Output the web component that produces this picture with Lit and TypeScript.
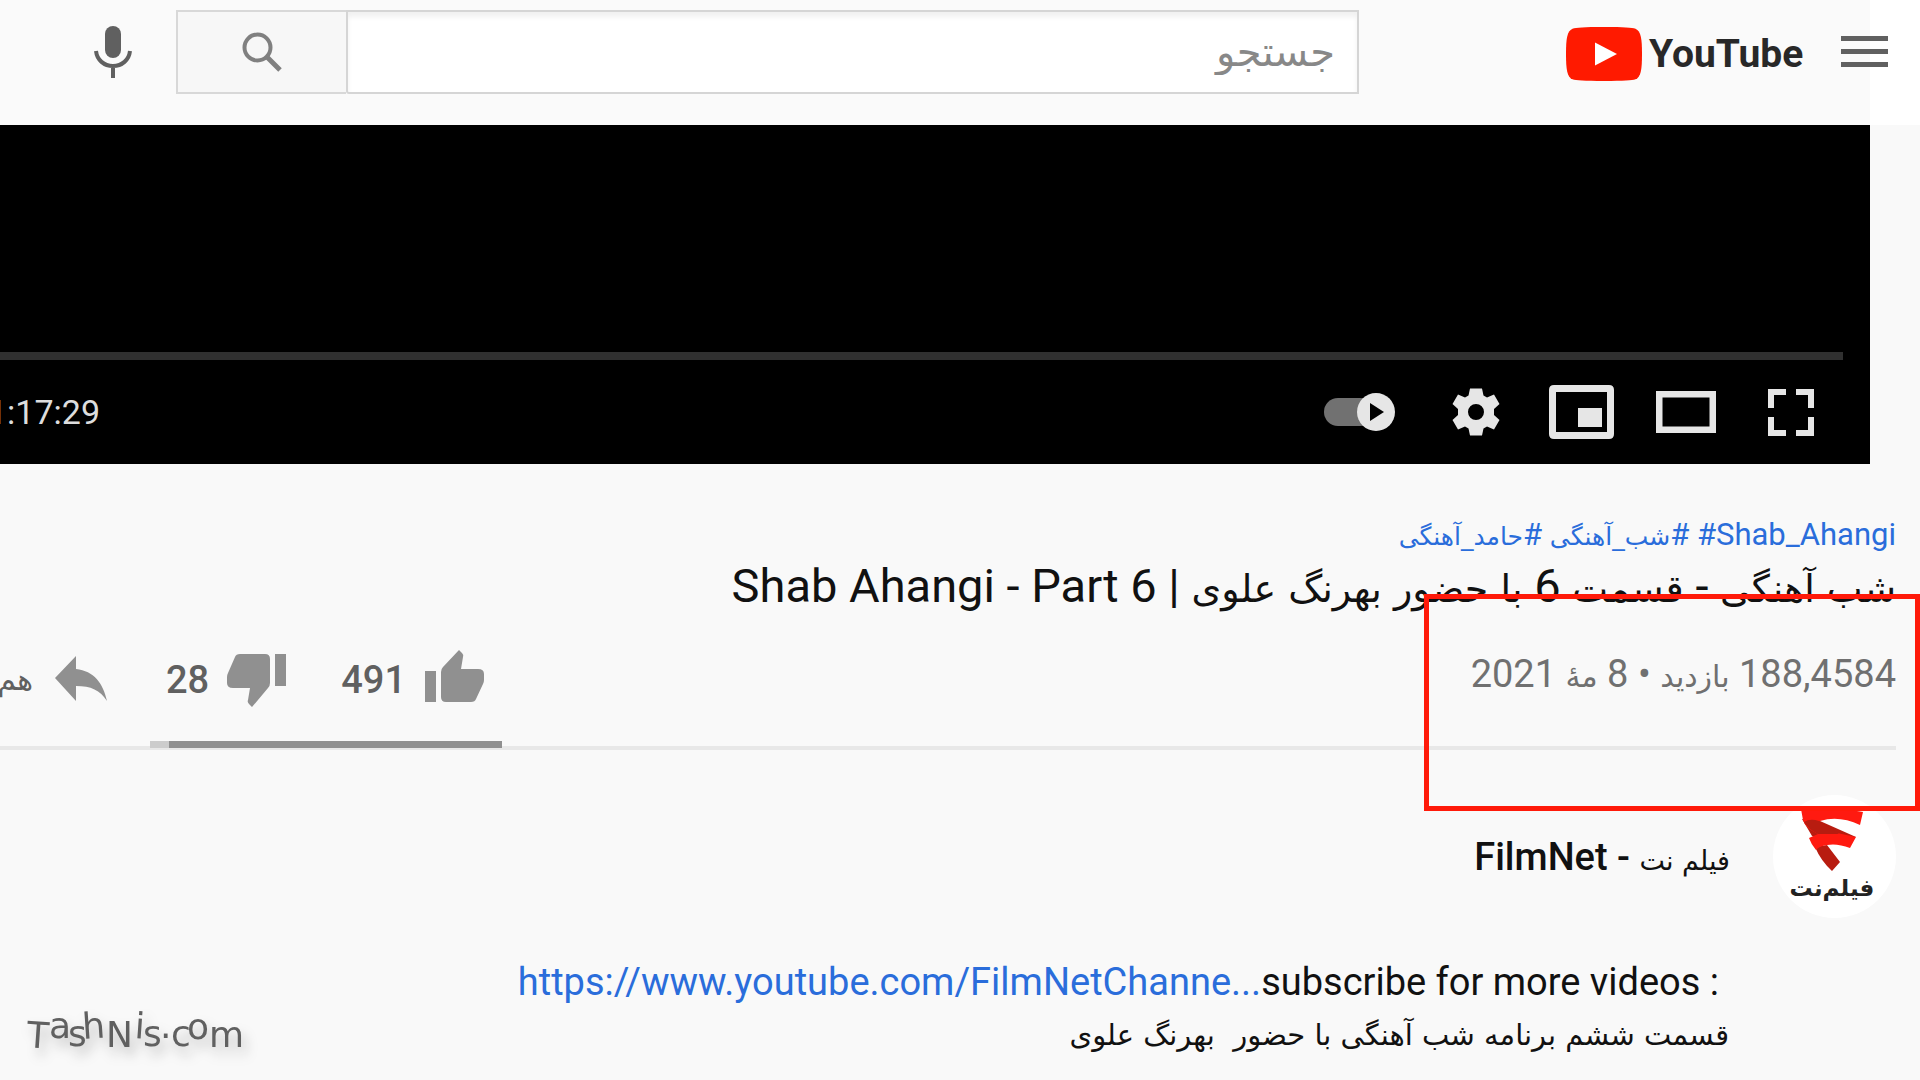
import { LitElement, html, css, svg } from "lit";
import { customElement } from "lit/decorators.js";

const icons = {
  fullscreen: svg`<path d="M29 7h18v6H35v13h-6zM57 7h18v19h-6V13H57zM29 35h6v13h12v6H29zM69 35h6v19H57v-6h12z"/>`,
  theater: svg`<path fill-rule="evenodd" d="M22 9h60v42H22zM28.500 15.500v29h47v-29z"/>`,
  mini: svg`<path fill-rule="evenodd" d="M25 3h55q5 0 5 5v44q0 5-5 5H25q-5 0-5-5V8q0-5 5-5zM27 10v40h51V10zM49 26h24v19H49z"/>`,
  gear: svg`<g transform="translate(52 30)"><path fill-rule="evenodd" d="M-6-23.500H6L7.500-16.500 11-14.500 18-17.500 23.500-8 18-3V3L23.500 8 18 17.500 11 14.500 7.500 16.500 6 23.500H-6L-7.500 16.500-11 14.500-18 17.500-23.500 8-18 3V-3L-23.500-8-18-17.500-11-14.500-7.500-16.500zM0-8a8 8 0 1 0 0 16a8 8 0 1 0 0-16z"/></g>`,
  autoplay: svg`<rect x="5" y="16" width="50" height="28" rx="14" fill="#717171"/><circle cx="57" cy="30" r="19"/><path d="M51 21v18l14-9z" fill="#000"/>`,
};

@customElement("app-root")
export class AppRoot extends LitElement {
  static styles = css`
    :host {
      display: block;
      position: relative;
      direction: rtl;
      min-height: 100vh;
      overflow: hidden;
      background: #f9f9f9;
      color: #111;
      font-family: Roboto, "DejaVu Sans", sans-serif;
    }
    * { box-sizing: border-box; }
    button {
      display: flex;
      align-items: center;
      padding: 0;
      border: 0;
      background: none;
      color: inherit;
      font: inherit;
      cursor: pointer;
    }
    a { color: #2a6ddb; text-decoration: none; }
    svg { display: block; flex: none; }
    .fa { line-height: 0; font-family: "DejaVu Sans", sans-serif; }

    .header {
      display: flex;
      align-items: center;
      height: 125px;
      padding: 0 32px 22px 94px;
      background: linear-gradient(to left, #fff 50px, #fafafa 50px);
    }
    .brand { display: flex; align-items: center; gap: 7px; margin: 4px 40px 0 207px; direction: ltr; color: #282828; }
    .wordmark { width: 152px; font-size: 39px; font-weight: 700; line-height: 60px; }
    .search { display: flex; flex: 1; height: 84px; min-width: 0; }
    .search-input {
      flex: 1;
      min-width: 0;
      padding: 0 22px;
      border: 2px solid #d5d5d5;
      border-radius: 0 0 0 3px;
      background: #fff;
      box-shadow: inset 0 5px 5px #f1f1f1;
      font: 40px "DejaVu Sans", sans-serif;
      color: #111;
      outline: none;
    }
    .search-input::placeholder { color: #888; opacity: 1; }
    .search-button { justify-content: center; width: 170px; border: 2px solid #d8d8d8; border-right: 0; background: #f7f7f7; }
    .mic { margin-inline-start: 44px; }

    .player { display: flex; flex-direction: column; justify-content: flex-end; height: 339px; margin-inline-start: 50px; background: #000; }
    .progress { height: 8px; margin-inline-start: 27px; background: #303030; }
    .controls { display: flex; align-items: center; height: 104px; padding-inline-start: 26px; fill: #e6e6e6; }
    .time { margin-right: auto; color: #ddd; font-size: 34px; line-height: 48px; }
    .time span { display: block; width: 100px; direction: rtl; white-space: nowrap; }

    .meta { position: relative; padding: 50px 24px 0 0; }
    .tags { font-size: 31px; line-height: 42px; }
    .tags .fa { font-size: 25px; }
    .title { margin: 0; font-size: 47px; font-weight: 400; line-height: 60px; white-space: nowrap; }
    .title .fa { font-size: 38px; }
    .info { display: flex; justify-content: space-between; height: 134px; border-bottom: 4px solid #e8e8e8; }
    .views { padding-top: 34px; color: #707070; font-size: 38px; line-height: 48px; }
    .views .fa { font-size: 30px; }
    .actions { display: flex; color: #606060; fill: #909090; font-size: 38px; font-weight: 500; line-height: 60px; }
    .sentiment { width: 352px; padding-top: 34px; }
    .votes { display: flex; justify-content: space-between; padding: 0 18px 0 16px; }
    .vote { gap: 18px; }
    .ratio { display: flex; height: 7px; margin-top: 31px; background: #ccc; }
    .likes { background: #909090; }
    .share { align-self: flex-start; gap: 22px; width: 150px; margin-top: 34px; padding-inline-start: 43px; overflow: hidden; white-space: nowrap; }
    .share .fa { font-size: 30px; line-height: 60px; }
    .highlight { position: absolute; top: 130px; right: 0; width: 496px; height: 217px; border: 5px solid #ff1a0a; pointer-events: none; z-index: 1; }

    .channel { display: flex; align-items: center; gap: 43px; padding: 45px 24px 0 0; font-size: 38px; font-weight: 500; line-height: 48px; }
    .channel a { color: #111; }
    .channel .fa { font-size: 27px; }
    .mark { font-family: "DejaVu Sans", sans-serif; font-weight: 700; font-size: 23px; fill: #222; }
    .description { padding: 39px 191px 0 0; font-size: 38px; line-height: 50px; }
    .description p { margin: 0; white-space: pre; }
    .description .latin { direction: ltr; padding-right: 10px; text-align: right; }
    .description .fa { font-size: 29px; }
    .watermark { position: absolute; left: 20px; bottom: 10px; filter: drop-shadow(4px 8px 6px #bbb); }
    .watermark text { font-family: "DejaVu Sans", sans-serif; font-size: 36px; fill: #606060; }
  `;

  private likes = 491;
  private dislikes = 28;

  private control(label: string, icon: unknown) {
    return html`<button aria-label=${label}><svg width="105" height="60" viewBox="0 0 105 60">${icon}</svg></button>`;
  }

  render() {
    const share = (this.likes / (this.likes + this.dislikes)) * 100;
    return html`
      <header class="header">
        <button aria-label="راهنما">
          <svg width="47" height="32" viewBox="0 0 47 32" fill="#606060"><path d="M0 0h47v5H0zM0 13h47v5H0zM0 26h47v5H0z"/></svg>
        </button>
        <a class="brand" href="#" aria-label="YouTube">
          <svg width="76" height="54" viewBox="0 0 76 54"><path fill="#ff1a00" d="M38 0C58 0 66 .6 69.500 1.700 75 4 76 12 76 27s-1 23-6.500 25.300C66 53.400 58 54 38 54S10 53.400 6.500 52.300C1 50 0 42 0 27S1 4 6.500 1.700C10 .6 18 0 38 0z"/><path fill="#fff" d="M29 15.500v23L51 27z"/></svg>
          <span class="wordmark">YouTube</span>
        </a>
        <form class="search" role="search" @submit=${(e: Event) => e.preventDefault()}>
          <input class="search-input" type="text" aria-label="جستجو" placeholder="جستجو" />
          <button class="search-button" aria-label="جستجو">
            <svg width="40" height="40" viewBox="0 0 40 40" fill="none" stroke="#808080"><circle cx="15.500" cy="15.500" r="13" stroke-width="4"/><path d="M25 25l13 13" stroke-width="5"/></svg>
          </button>
        </form>
        <button class="mic" aria-label="جستجوی صوتی">
          <svg width="38" height="52" viewBox="0 0 38 52"><rect x="11" y="0" width="16" height="32" rx="8" fill="#606060"/><path d="M2 25c1 9 8 15 17 15s16-6 17-15M19 40v12" fill="none" stroke="#606060" stroke-width="4"/></svg>
        </button>
      </header>

      <section class="player">
        <div class="progress"></div>
        <div class="controls">
          ${this.control("تمام صفحه", icons.fullscreen)}
          ${this.control("حالت سینما", icons.theater)}
          ${this.control("پخش‌کننده کوچک", icons.mini)}
          ${this.control("تنظیمات", icons.gear)}
          ${this.control("پخش خودکار", icons.autoplay)}
          <div class="time"><span>1:17:29</span></div>
        </div>
      </section>

      <section class="meta">
        <div class="tags">
          <a href="#" dir="ltr">#Shab_Ahangi</a>
          <a href="#">#<span class="fa">شب_آهنگی</span></a>
          <a href="#">#<span class="fa">حامد_آهنگی</span></a>
        </div>
        <h1 class="title"><span class="fa">شب آهنگی</span> - <span class="fa">قسمت</span> 6 <span class="fa">با حضور بهرنگ علوی</span> | <bdi>Shab Ahangi - Part 6</bdi></h1>
        <div class="info">
          <div class="views">188,4584 <span class="fa">بازدید</span> • 8 <span class="fa">مهٔ</span> 2021</div>
          <div class="actions">
            <div class="sentiment">
              <div class="votes">
                <button class="vote" aria-label="پسندیدن">
                  <svg width="60" height="60" viewBox="0 0 60 60"><path d="M1 21h11v31H1zM17 22q0-3 2-5L35 0l3 3q2 2 1 4l-2 12h17q6 0 6 5v6q0 2-1 4l-7 15q-1 3-5 3H22q-5 0-5-5z"/></svg>
                  <span>${this.likes}</span>
                </button>
                <button class="vote" aria-label="نپسندیدن">
                  <svg width="60" height="60" viewBox="0 0 60 60"><path d="M48 4h11v32H48zM43 33q0 3-2 5L25 57l-3-3q-2-2-1-4l2-12H6q-6 0-6-5v-6q0-2 1-4L8 7q1-3 5-3h25q5 0 5 5z"/></svg>
                  <span>${this.dislikes}</span>
                </button>
              </div>
              <div class="ratio"><div class="likes" style="width:${share}%"></div></div>
            </div>
            <button class="share">
              <svg width="52" height="60" viewBox="0 0 52 60"><path d="M0 28L21 6v13c18 2 27 14 31 32C45 40 36 36 21 36v15z"/></svg>
              <span class="fa">هم‌رسانی</span>
            </button>
          </div>
        </div>
        <div class="highlight"></div>
      </section>

      <section class="channel">
        <svg width="123" height="123" viewBox="0 0 123 123">
          <circle cx="61.500" cy="61.500" r="61.500" fill="#fff"/>
          <path fill="#b81c10" d="M29 24L47 26 83 42 50 46 39 41zM42 52L54 50 67 67 59 76Q48 66 42 52z"/>
          <path fill="#ff1a10" d="M28 14q30-3 62 3l-3 13Q66 20 47 26q-3 2-2 4L64 38 83 42 77 53Q64 48 54 50q-8 1-11 5-5-6-7-12l9-4Q32 33 30 25z"/>
          <path fill="#b81c10" d="M31 27q6-4 15-1L66 39 45 39Q35 34 31 27z"/>
          <text class="mark" x="59" y="101" text-anchor="middle">فیلم‌نت</text>
        </svg>
        <a href="#"><span class="fa">فیلم نت</span> - <bdi>FilmNet</bdi></a>
      </section>
      <section class="description">
        <p class="latin"><a href="#">https://www.youtube.com/FilmNetChanne...</a>subscribe for more videos :</p>
        <p><span class="fa">قسمت ششم برنامه شب آهنگی با حضور  بهرنگ علوی</span></p>
      </section>

      <svg class="watermark" width="240" height="60" viewBox="0 0 240 60" direction="ltr" role="img" aria-label="TashNis.com">
        <text x="6 29 48 63 86 114 123 140 151 167 189" y="37 28 36 29 37 28 36 28 36 29 37" rotate="4 0 0 -4 0 4 0 0 0 0 0">TashNis.com</text>
      </svg>
    `;
  }
}
